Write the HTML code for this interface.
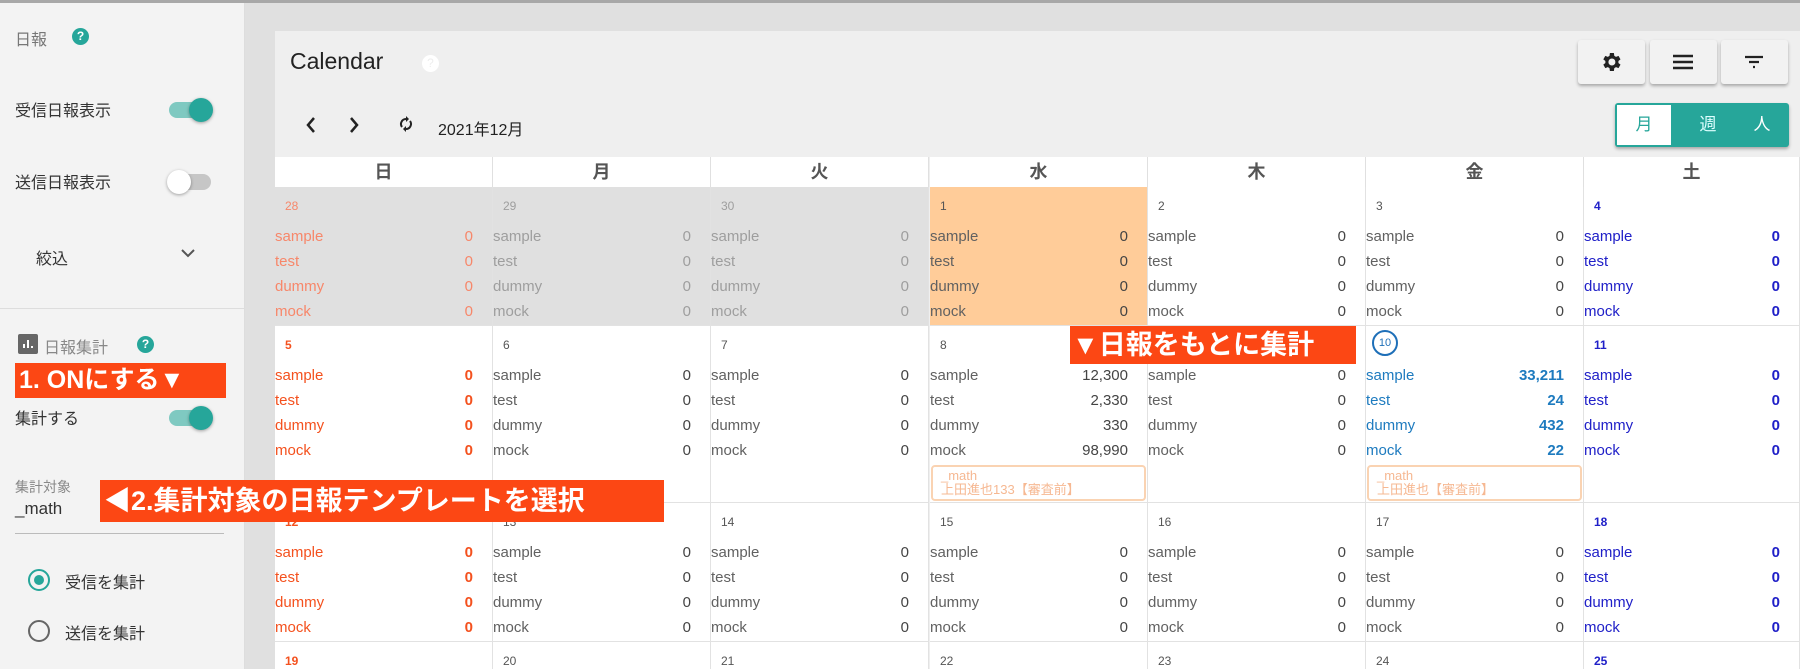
<!DOCTYPE html>
<html><head><meta charset="utf-8"><style>
*{margin:0;padding:0;box-sizing:border-box}
html,body{width:1800px;height:669px;overflow:hidden}
body{background:#e0e0e0;font-family:"Liberation Sans","Noto Sans CJK JP",sans-serif;position:relative}
.a{position:absolute}
#top{left:0;top:0;width:1800px;height:3px;background:#a8a8a8}
#side{left:0;top:3px;width:245px;height:680px;background:#f3f3f3;border-right:1px solid #ddd}
.st{font-size:16px;color:#333}
.tg{width:42px;height:16px;border-radius:8px}
.tg.on{background:#7fc9c1}
.tg.off{background:#c6c6c6}
.kn{width:24px;height:24px;border-radius:50%;top:-4px;box-shadow:0 1px 3px rgba(0,0,0,.35)}
.on .kn{right:-2px;background:#26a69a}
.off .kn{left:-2px;background:#fff}
.q{width:17px;height:17px;border-radius:50%;background:#26a69a;color:#fff;font-size:12px;font-weight:bold;text-align:center;line-height:17px}
#card{left:275px;top:31px;width:1525px;height:640px;background:#efefef}
.btn{top:40px;width:67px;height:44px;background:#f2f2f2;border-radius:3px;box-shadow:0 2px 3px rgba(0,0,0,.3)}
.hd{top:157px;height:30px;width:218px;background:#fff;border-right:1px solid #e0e0e0;text-align:center;font-size:18px;font-weight:bold;color:#555;line-height:30px}
.c{background:#fff;border-right:1px solid #e2e2e2;border-bottom:1px solid #e2e2e2;font-size:15px;color:#616161;width:218px}
.c .d{position:absolute;left:10px;top:12px;font-size:12px;color:#555}
.c .rs{position:absolute;left:0;right:19px;top:37px}
.c .r{height:25px;line-height:25px}
.c .r b{float:right;font-weight:normal;color:#444}
.g{background:#e0e0e0;color:#9e9e9e}
.g .d,.g .r b{color:#9e9e9e}
.o{background:#ffcc99}
.sun{color:#f4511e}.sun .d{color:#f4511e;font-weight:bold}.sun .r b{color:#f4511e;font-weight:bold}
.sunp{color:#f7876a;background:#e0e0e0}.sunp .d,.sunp .r b{color:#f7876a}
.sat{color:#2020c8}.sat .d{color:#2020c8;font-weight:bold}.sat .r b{color:#2020c8;font-weight:bold}
.td{color:#1e7bbf}.td .r b{color:#1e7bbf;font-weight:bold}
.mb{position:absolute;left:1px;right:1px;top:139px;height:36px;border:2px solid #fad3b2;border-radius:4px;color:#f6b892;font-size:13px;line-height:14px;padding:2px 8px}
.ann{background:#fc4714;color:#fff;font-weight:bold;white-space:nowrap}
</style></head><body>
<div class="a" id="top"></div>
<div class="a" id="side">
 <div class="a" style="left:15px;top:23px;font-size:16px;color:#777">日報</div>
 <div class="a q" style="left:72px;top:25px">?</div>
 <div class="a st" style="left:15px;top:94px">受信日報表示</div>
 <div class="a tg on" style="left:169px;top:99px"><div class="a kn"></div></div>
 <div class="a st" style="left:15px;top:166px">送信日報表示</div>
 <div class="a tg off" style="left:169px;top:171px"><div class="a kn"></div></div>
 <div class="a st" style="left:36px;top:242px">絞込</div>
 <svg class="a" style="left:180px;top:244px" width="16" height="12" viewBox="0 0 16 12"><path d="M2 3l6 6 6-6" stroke="#555" stroke-width="2" fill="none"/></svg>
 <div class="a" style="left:0;top:305px;width:245px;height:1px;background:#ddd"></div>
 <div class="a" style="left:18px;top:331px;width:20px;height:20px;background:#666;border-radius:2px"><svg width="20" height="20"><path d="M6 14v-4M10 14V6M14 14v-2" stroke="#fff" stroke-width="2"/></svg></div>
 <div class="a" style="left:44px;top:331px;font-size:16px;color:#888">日報集計</div>
 <div class="a q" style="left:137px;top:333px">?</div>
 <div class="a st" style="left:15px;top:402px">集計する</div>
 <div class="a tg on" style="left:169px;top:407px"><div class="a kn"></div></div>
 <div class="a" style="left:15px;top:474px;font-size:14px;color:#888">集計対象</div>
 <div class="a" style="left:15px;top:496px;font-size:17px;color:#333">_math</div>
 <div class="a" style="left:15px;top:530px;width:209px;height:1px;background:#bbb"></div>
 <div class="a" style="left:28px;top:566px;width:22px;height:22px;border:2px solid #26a69a;border-radius:50%"><div class="a" style="left:4px;top:4px;width:10px;height:10px;border-radius:50%;background:#26a69a"></div></div>
 <div class="a st" style="left:65px;top:566px">受信を集計</div>
 <div class="a" style="left:28px;top:617px;width:22px;height:22px;border:2px solid #666;border-radius:50%"></div>
 <div class="a st" style="left:65px;top:617px">送信を集計</div>
</div>
<div class="a" id="card"></div>
<div class="a" style="left:290px;top:48px;font-size:23px;color:#222">Calendar</div>
<div class="a" style="left:422px;top:55px;width:17px;height:17px;border-radius:50%;background:#fff;color:#eee;font-size:12px;text-align:center;line-height:17px">?</div>
<div class="a btn" style="left:1578px"><svg style="margin:10px 0 0 21px" width="24" height="24" viewBox="0 0 24 24"><path fill="#222" d="M19.4 13a7.5 7.5 0 000-2l2.1-1.6-2-3.5-2.5 1a7.6 7.6 0 00-1.7-1L14.9 3h-4l-.4 2.9a7.6 7.6 0 00-1.7 1l-2.5-1-2 3.5L6.4 11a7.5 7.5 0 000 2l-2.1 1.6 2 3.5 2.5-1a7.6 7.6 0 001.7 1l.4 2.9h4l.4-2.9a7.6 7.6 0 001.7-1l2.5 1 2-3.5zM12.9 15.5a3.5 3.5 0 110-7 3.5 3.5 0 010 7z"/></svg></div>
<div class="a btn" style="left:1650px"><svg style="margin:10px 0 0 21px" width="24" height="24"><path d="M2 6h20M2 12h20M2 18h20" stroke="#222" stroke-width="2.5"/></svg></div>
<div class="a btn" style="left:1721px"><svg style="margin:10px 0 0 21px" width="24" height="24"><path d="M3 7h18M7 12h10M11 17h2" stroke="#222" stroke-width="2.2"/></svg></div>
<svg class="a" style="left:304px;top:116px" width="14" height="18"><path d="M10 2L4 9l6 7" stroke="#222" stroke-width="2.5" fill="none"/></svg>
<svg class="a" style="left:347px;top:116px" width="14" height="18"><path d="M4 2l6 7-6 7" stroke="#222" stroke-width="2.5" fill="none"/></svg>
<svg class="a" style="left:398px;top:116px" width="16" height="16" viewBox="0 0 16 16"><path d="M8 3a5 5 0 00-4 8M8 13a5 5 0 004-8" stroke="#222" stroke-width="2" fill="none"/><path d="M8 0v6l3-3zM8 16v-6l-3 3z" fill="#222"/></svg>
<div class="a" style="left:438px;top:116px;font-size:16px;color:#222">2021年12月</div>
<div class="a" style="left:1615px;top:103px;width:174px;height:44px;background:#26a69a;border-radius:3px;box-shadow:0 2px 3px rgba(0,0,0,.3)">
 <div class="a" style="left:2px;top:2px;width:54px;height:40px;background:#fff;color:#26a69a;text-align:center;line-height:40px;font-size:17px">月</div>
 <div class="a" style="left:66px;top:2px;width:54px;line-height:40px;color:#dff;font-size:17px;text-align:center">週</div>
 <div class="a" style="left:120px;top:2px;width:54px;line-height:40px;color:#fff;font-size:17px;text-align:center">人</div>
</div>
<div class="a hd" style="left:275px">日</div><div class="a hd" style="left:493px">月</div><div class="a hd" style="left:711px">火</div><div class="a hd" style="left:930px">水</div><div class="a hd" style="left:1148px">木</div><div class="a hd" style="left:1366px">金</div><div class="a hd" style="left:1584px;width:216px">土</div>

<div class="a c sunp" style="left:275px;top:187px;height:139px"><div class="d">28</div><div class="rs"><div class="r">sample<b>0</b></div><div class="r">test<b>0</b></div><div class="r">dummy<b>0</b></div><div class="r">mock<b>0</b></div></div></div>
<div class="a c g" style="left:493px;top:187px;height:139px"><div class="d">29</div><div class="rs"><div class="r">sample<b>0</b></div><div class="r">test<b>0</b></div><div class="r">dummy<b>0</b></div><div class="r">mock<b>0</b></div></div></div>
<div class="a c g" style="left:711px;top:187px;height:139px"><div class="d">30</div><div class="rs"><div class="r">sample<b>0</b></div><div class="r">test<b>0</b></div><div class="r">dummy<b>0</b></div><div class="r">mock<b>0</b></div></div></div>
<div class="a c o" style="left:930px;top:187px;height:139px"><div class="d">1</div><div class="rs"><div class="r">sample<b>0</b></div><div class="r">test<b>0</b></div><div class="r">dummy<b>0</b></div><div class="r">mock<b>0</b></div></div></div>
<div class="a c" style="left:1148px;top:187px;height:139px"><div class="d">2</div><div class="rs"><div class="r">sample<b>0</b></div><div class="r">test<b>0</b></div><div class="r">dummy<b>0</b></div><div class="r">mock<b>0</b></div></div></div>
<div class="a c" style="left:1366px;top:187px;height:139px"><div class="d">3</div><div class="rs"><div class="r">sample<b>0</b></div><div class="r">test<b>0</b></div><div class="r">dummy<b>0</b></div><div class="r">mock<b>0</b></div></div></div>
<div class="a c sat" style="left:1584px;top:187px;height:139px;width:216px"><div class="d">4</div><div class="rs"><div class="r">sample<b>0</b></div><div class="r">test<b>0</b></div><div class="r">dummy<b>0</b></div><div class="r">mock<b>0</b></div></div></div>

<div class="a c sun" style="left:275px;top:326px;height:177px"><div class="d">5</div><div class="rs"><div class="r">sample<b>0</b></div><div class="r">test<b>0</b></div><div class="r">dummy<b>0</b></div><div class="r">mock<b>0</b></div></div></div>
<div class="a c" style="left:493px;top:326px;height:177px"><div class="d">6</div><div class="rs"><div class="r">sample<b>0</b></div><div class="r">test<b>0</b></div><div class="r">dummy<b>0</b></div><div class="r">mock<b>0</b></div></div></div>
<div class="a c" style="left:711px;top:326px;height:177px"><div class="d">7</div><div class="rs"><div class="r">sample<b>0</b></div><div class="r">test<b>0</b></div><div class="r">dummy<b>0</b></div><div class="r">mock<b>0</b></div></div></div>
<div class="a c" style="left:930px;top:326px;height:177px"><div class="d">8</div><div class="rs"><div class="r">sample<b>12,300</b></div><div class="r">test<b>2,330</b></div><div class="r">dummy<b>330</b></div><div class="r">mock<b>98,990</b></div></div><div class="mb">_math<br>上田進也133【審査前】</div></div>
<div class="a c" style="left:1148px;top:326px;height:177px"><div class="d">9</div><div class="rs"><div class="r">sample<b>0</b></div><div class="r">test<b>0</b></div><div class="r">dummy<b>0</b></div><div class="r">mock<b>0</b></div></div></div>
<div class="a c td" style="left:1366px;top:326px;height:177px"><div class="a" style="left:6px;top:4px;width:26px;height:26px;border:2px solid #1e6fb8;border-radius:50%;text-align:center;line-height:22px;font-size:11px;color:#1e6fb8">10</div><div class="rs"><div class="r">sample<b>33,211</b></div><div class="r">test<b>24</b></div><div class="r">dummy<b>432</b></div><div class="r">mock<b>22</b></div></div><div class="mb">_math<br>上田進也【審査前】</div></div>
<div class="a c sat" style="left:1584px;top:326px;height:177px;width:216px"><div class="d">11</div><div class="rs"><div class="r">sample<b>0</b></div><div class="r">test<b>0</b></div><div class="r">dummy<b>0</b></div><div class="r">mock<b>0</b></div></div></div>

<div class="a c sun" style="left:275px;top:503px;height:139px"><div class="d">12</div><div class="rs"><div class="r">sample<b>0</b></div><div class="r">test<b>0</b></div><div class="r">dummy<b>0</b></div><div class="r">mock<b>0</b></div></div></div>
<div class="a c" style="left:493px;top:503px;height:139px"><div class="d">13</div><div class="rs"><div class="r">sample<b>0</b></div><div class="r">test<b>0</b></div><div class="r">dummy<b>0</b></div><div class="r">mock<b>0</b></div></div></div>
<div class="a c" style="left:711px;top:503px;height:139px"><div class="d">14</div><div class="rs"><div class="r">sample<b>0</b></div><div class="r">test<b>0</b></div><div class="r">dummy<b>0</b></div><div class="r">mock<b>0</b></div></div></div>
<div class="a c" style="left:930px;top:503px;height:139px"><div class="d">15</div><div class="rs"><div class="r">sample<b>0</b></div><div class="r">test<b>0</b></div><div class="r">dummy<b>0</b></div><div class="r">mock<b>0</b></div></div></div>
<div class="a c" style="left:1148px;top:503px;height:139px"><div class="d">16</div><div class="rs"><div class="r">sample<b>0</b></div><div class="r">test<b>0</b></div><div class="r">dummy<b>0</b></div><div class="r">mock<b>0</b></div></div></div>
<div class="a c" style="left:1366px;top:503px;height:139px"><div class="d">17</div><div class="rs"><div class="r">sample<b>0</b></div><div class="r">test<b>0</b></div><div class="r">dummy<b>0</b></div><div class="r">mock<b>0</b></div></div></div>
<div class="a c sat" style="left:1584px;top:503px;height:139px;width:216px"><div class="d">18</div><div class="rs"><div class="r">sample<b>0</b></div><div class="r">test<b>0</b></div><div class="r">dummy<b>0</b></div><div class="r">mock<b>0</b></div></div></div>

<div class="a c sun" style="left:275px;top:642px;height:40px"><div class="d">19</div></div>
<div class="a c" style="left:493px;top:642px;height:40px"><div class="d">20</div></div>
<div class="a c" style="left:711px;top:642px;height:40px"><div class="d">21</div></div>
<div class="a c" style="left:930px;top:642px;height:40px"><div class="d">22</div></div>
<div class="a c" style="left:1148px;top:642px;height:40px"><div class="d">23</div></div>
<div class="a c" style="left:1366px;top:642px;height:40px"><div class="d">24</div></div>
<div class="a c sat" style="left:1584px;top:642px;height:40px;width:216px"><div class="d">25</div></div>

<div class="a ann" style="left:15px;top:363px;width:211px;height:35px;font-size:25px;line-height:35px;padding-left:4px">1. ONにする▼</div>
<div class="a ann" style="left:100px;top:480px;width:564px;height:42px;font-size:27px;line-height:42px;padding-left:4px">◀2.集計対象の日報テンプレートを選択</div>
<div class="a ann" style="left:1070px;top:326px;width:286px;height:38px;font-size:27px;line-height:38px;padding-left:2px">▼日報をもとに集計</div>
</body></html>
